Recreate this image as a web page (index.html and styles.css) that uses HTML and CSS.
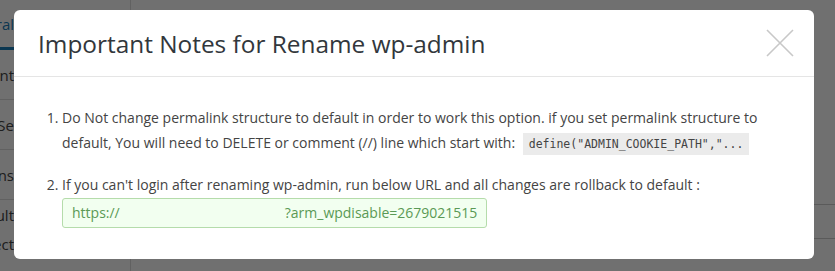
FILE: index.html
```html
<!DOCTYPE html>
<html lang="en">
<head>
    <meta charset="UTF-8">
    <title>Rename wp-admin</title>
    <link rel="stylesheet" href="styles.css">
</head>
<body>
    <div class="page">
        <aside class="side-tabs">
            <div class="side-tab active">General</div>
            <div class="side-tab">Content</div>
            <div class="side-tab">Login Se</div>
            <div class="side-tab">Options</div>
            <div class="side-tab short">Default</div>
            <div class="side-tab short">Redirect</div>
        </aside>
        <section class="page-main">
            <div class="row tall"></div>
            <div class="row"></div>
            <div class="row"></div>
        </section>
    </div>

    <div class="overlay"></div>

    <div class="modal">
        <div class="modal-header">
            <h2>Important Notes for Rename wp-admin</h2>
            <button class="modal-close" aria-label="Close">
                <svg width="28" height="28" viewBox="0 0 28 28">
                    <path d="M1 1 L27 27 M27 1 L1 27" stroke="#c8c8c8" stroke-width="1.6" fill="none"/>
                </svg>
            </button>
        </div>
        <div class="modal-body">
            <ol class="notes">
                <li>Do Not change permalink structure to default in order to work this option. if you set permalink structure to default, You will need to DELETE or comment (//) line which start with: <code>define("ADMIN_COOKIE_PATH","...</code></li>
                <li>If you can't login after renaming wp-admin, run below URL and all changes are rollback to default :
                    <div class="url-box">https://<span class="blur">&nbsp;</span>?arm_wpdisable=2679021515</div>
                </li>
            </ol>
        </div>
    </div>
</body>
</html>
```

FILE: styles.css
```css
body {
    margin: 0;
    font-family: "Open Sans", sans-serif;
    background: #fff;
    overflow: hidden;
}

.page {
    display: flex;
    height: 271px;
}

.side-tabs {
    width: 130px;
    border-right: 1px solid #ddd;
    flex-shrink: 0;
}

.side-tab {
    height: 49px;
    border-bottom: 1px solid #ddd;
    font-size: 15px;
    color: #444;
    display: flex;
    align-items: center;
    justify-content: flex-end;
    padding-right: 116px;
    white-space: nowrap;
    overflow: hidden;
}

.side-tab.active {
    color: #1a7db8;
    border-bottom: 3px solid #1a7db8;
    height: 47px;
}

.side-tab.short {
    height: 29px;
    border-bottom: none;
}

.page-main {
    flex: 1;
}

.row {
    height: 33px;
    border-bottom: 1px solid #ccc;
}

.row.tall {
    height: 204px;
}

.overlay {
    position: fixed;
    inset: 0;
    background: rgba(0, 0, 0, 0.56);
}

.modal {
    position: fixed;
    top: 10px;
    left: 14px;
    width: 800px;
    height: 249px;
    background: #fff;
    border-radius: 6px;
}

.modal-header {
    display: flex;
    justify-content: space-between;
    align-items: center;
    height: 66px;
    padding: 0 20px 0 24px;
    border-bottom: 1px solid #e5e5e5;
}

.modal-header h2 {
    margin: 0;
    font-size: 24.4px;
    font-weight: 400;
    color: #32373c;
}

.modal-close {
    background: none;
    border: none;
    padding: 0;
    width: 28px;
    height: 28px;
    cursor: pointer;
}

.modal-body {
    padding: 29px 30px 0 33px;
}

.notes {
    margin: 0;
    padding-left: 15px;
    font-size: 14px;
    line-height: 24.5px;
    color: #444;
}

.notes li + li {
    margin-top: 17px;
}

.notes code {
    font-family: "DejaVu Sans Mono", monospace;
    font-size: 11.5px;
    background: #ebebeb;
    padding: 4px 6px;
    margin-left: 4px;
}

.url-box {
    width: fit-content;
    padding: 3px 9px;
    border: 1px solid #b5dcab;
    border-radius: 3px;
    background: #f2fff0;
    color: #5a9a55;
    font-size: 14px;
    line-height: 22px;
}

.blur {
    display: inline-block;
    width: 165px;
}
```
